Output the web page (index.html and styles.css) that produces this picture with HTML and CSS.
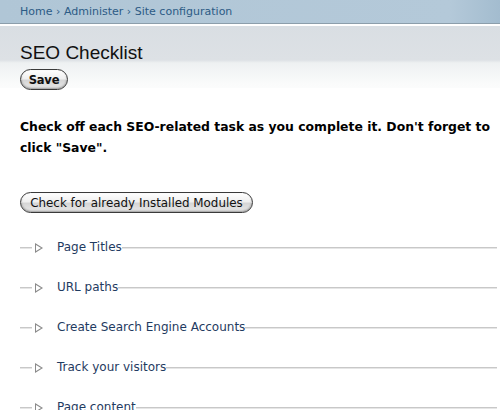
FILE: index.html
```html
<!DOCTYPE html>
<html>
<head>
<meta charset="utf-8">
<title>SEO Checklist</title>
<link rel="stylesheet" href="styles.css">
</head>
<body>
  <div class="header">
    <div class="breadcrumb"><a href="#">Home</a> › <a href="#">Administer</a> › <a href="#">Site configuration</a></div>
  </div>
  <div class="titlebar">
    <h2 class="title">SEO Checklist</h2>
    <button class="btn btn-save" type="button">Save</button>
  </div>
  <div class="content">
    <p class="intro">Check off each SEO-related task as you complete it. Don't forget to click "Save".</p>
    <button class="btn btn-check" type="button">Check for already Installed Modules</button>
    <div class="groups">
      <div class="group"><span class="rule rule-lead"></span><span class="arrow"></span><a href="#">Page Titles</a><span class="rule"></span></div>
      <div class="group"><span class="rule rule-lead"></span><span class="arrow"></span><a href="#">URL paths</a><span class="rule"></span></div>
      <div class="group"><span class="rule rule-lead"></span><span class="arrow"></span><a href="#">Create Search Engine Accounts</a><span class="rule"></span></div>
      <div class="group"><span class="rule rule-lead"></span><span class="arrow"></span><a href="#">Track your visitors</a><span class="rule"></span></div>
      <div class="group"><span class="rule rule-lead"></span><span class="arrow"></span><a href="#">Page content</a><span class="rule"></span></div>
    </div>
  </div>
</body>
</html>
```
FILE: styles.css
```css
html, body {
  margin: 0;
  padding: 0;
  background: #fff;
  overflow: hidden;
}

body {
  font-family: "DejaVu Sans", Verdana, sans-serif;
  font-size: 12px;
  color: #000;
}

.header {
  height: 23px;
  background: linear-gradient(to right, #b0c6d6 0%, #b4c9d9 90%, #a3bccf 100%);
  border-bottom: 1px solid #8c9eab;
  box-shadow: 0 1px 0 #ffffff;
  padding: 0 20px;
  display: flex;
  align-items: center;
}

.breadcrumb {
  font-size: 11px;
  color: #2c5b85;
}

.breadcrumb a {
  color: #2c5b85;
  text-decoration: none;
}

.titlebar {
  margin-top: 2px;
  padding: 16px 20px 0;
  height: 62px;
  box-sizing: border-box;
  background: linear-gradient(to bottom, #d9dee3 0px, #dde1e5 34px, #eef1f2 37px, #fafbfb 58px, #ffffff 72px);
}

.title {
  margin: 0;
  font-family: "Liberation Sans", Arial, sans-serif;
  font-weight: normal;
  font-size: 19px;
  line-height: 22px;
  color: #111;
}

.btn {
  display: block;
  font-family: "DejaVu Sans", Verdana, sans-serif;
  color: #111;
  border: 1px solid #3a3a3a;
  border-radius: 11px;
  background: linear-gradient(to bottom, #ffffff 0%, #f0f0f0 45%, #d6d6d6 55%, #e9e9e9 100%);
  box-shadow: inset 0 -1px 2px rgba(0,0,0,0.35), inset 0 1px 1px #fff;
  padding: 0;
  cursor: pointer;
}

.btn-save {
  margin-top: 5px;
  width: 48px;
  height: 21px;
  font-size: 11.5px;
  font-weight: bold;
  letter-spacing: -0.2px;
}

.content {
  padding: 0 20px;
}

.intro {
  margin: 28px -16px 0 0;
  font-weight: bold;
  font-size: 12.4px;
  line-height: 21px;
}

.btn-check {
  margin-top: 34px;
  width: 233px;
  height: 21px;
  font-size: 11.9px;
}

.groups {
  margin-top: 26px;
  margin-right: -17px;
  display: flex;
  flex-direction: column;
  gap: 24px;
}

.group {
  display: flex;
  align-items: center;
  height: 16px;
  font-size: 12px;
}

.group a {
  color: #1f3b61;
  text-decoration: none;
  white-space: nowrap;
}

.rule {
  flex: 1;
  height: 1px;
  background: #c8c8c8;
  border-bottom: 1px solid #e6e6e6;
  margin-top: 2px;
}

.rule-lead {
  flex: 0 0 12px;
  margin-right: 3px;
}

.arrow {
  flex: none;
  width: 0;
  height: 0;
  border-left: 8px solid #8a8a8a;
  border-top: 5px solid transparent;
  border-bottom: 5px solid transparent;
  margin-right: 14px;
  margin-top: 1px;
  position: relative;
}

.arrow::after {
  content: "";
  position: absolute;
  left: -7px;
  top: -3px;
  border-left: 5px solid #fff;
  border-top: 3px solid transparent;
  border-bottom: 3px solid transparent;
}
```
